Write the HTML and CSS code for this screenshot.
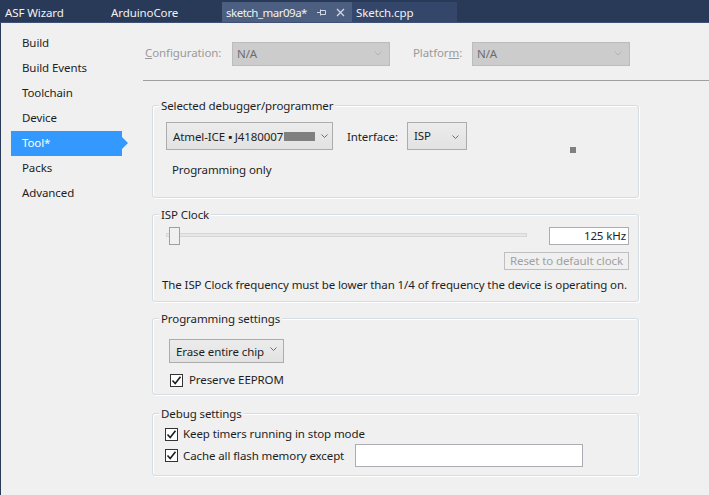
FILE: index.html
```html
<!DOCTYPE html>
<html>
<head>
<meta charset="utf-8">
<link rel="stylesheet" href="styles.css">
</head>
<body>
<div class="tabbar">
  <div class="tab t-asf">ASF Wizard</div>
  <div class="tab t-core">ArduinoCore</div>
  <div class="tab t-active">
    <span class="t-name">sketch_mar09a*</span>
    <svg class="pin" width="9" height="7" viewBox="0 0 9 7"><path d="M0 3.5H3M3.5 0.5V6.5M3.5 1.5H8.5V5.5H3.5" fill="none" stroke="#d0d7e5" stroke-width="1"/></svg>
    <svg class="close" width="9" height="9" viewBox="0 0 9 9"><path d="M1 1L8 8M8 1L1 8" stroke="#d0d7e5" stroke-width="1.3"/></svg>
  </div>
  <div class="tab t-cpp">Sketch.cpp</div>
</div>
<div class="main">
  <nav class="sidebar">
    <div class="nav-item">Build</div>
    <div class="nav-item">Build Events</div>
    <div class="nav-item">Toolchain</div>
    <div class="nav-item">Device</div>
    <div class="nav-item selected">Tool*</div>
    <div class="nav-item">Packs</div>
    <div class="nav-item">Advanced</div>
  </nav>
  <section class="content">
    <div class="config-row">
      <span class="dis-label cfg-label"><u>C</u>onfiguration:</span>
      <div class="dis-combo"><span>N/A</span><svg width="8" height="5" viewBox="0 0 8 5"><path d="M0.5 0.5L4 4L7.5 0.5" fill="none" stroke="#b4b4b4"/></svg></div>
      <span class="dis-label plat-label">Platfor<u>m</u>:</span>
      <div class="dis-combo"><span>N/A</span><svg width="8" height="5" viewBox="0 0 8 5"><path d="M0.5 0.5L4 4L7.5 0.5" fill="none" stroke="#b4b4b4"/></svg></div>
    </div>
    <div class="divider"></div>

    <div class="group g1">
      <span class="gtitle">Selected debugger/programmer</span>
      <div class="row">
        <div class="combo c-tool"><span>Atmel-ICE ▪ J4180007</span><span class="redact"></span><svg class="chev" width="7" height="4" viewBox="0 0 7 4"><path d="M0.5 0.5L3.5 3.5L6.5 0.5" fill="none" stroke="#6d6d6d"/></svg></div>
        <span class="lbl-iface">Interface:</span>
        <div class="combo c-isp"><span>ISP</span><svg class="chev" width="7" height="4" viewBox="0 0 7 4"><path d="M0.5 0.5L3.5 3.5L6.5 0.5" fill="none" stroke="#6d6d6d"/></svg></div>
      </div>
      <div class="prog-only">Programming only</div>
      <span class="dot"></span>
    </div>

    <div class="group g2">
      <span class="gtitle">ISP Clock</span>
      <div class="row slider-row">
        <div class="slider"><div class="track"></div><div class="thumb"></div></div>
        <div class="textbox tb-clock">125 kHz</div>
      </div>
      <div class="btn-row"><div class="btn-dis">Reset to default clock</div></div>
      <div class="note">The ISP Clock frequency must be lower than 1/4 of frequency the device is operating on.</div>
    </div>

    <div class="group g3">
      <span class="gtitle">Programming settings</span>
      <div class="combo c-erase"><span>Erase entire chip</span><svg class="chev" width="7" height="4" viewBox="0 0 7 4"><path d="M0.5 0.5L3.5 3.5L6.5 0.5" fill="none" stroke="#6d6d6d"/></svg></div>
      <label class="check c-eeprom"><span class="box"><svg width="11" height="11" viewBox="0 0 11 11"><path d="M1.5 5.5L4.2 8.5L9.5 1.8" fill="none" stroke="#1e1e1e" stroke-width="1.6"/></svg></span>Preserve EEPROM</label>
    </div>

    <div class="group g4">
      <span class="gtitle">Debug settings</span>
      <label class="check c-timers"><span class="box"><svg width="11" height="11" viewBox="0 0 11 11"><path d="M1.5 5.5L4.2 8.5L9.5 1.8" fill="none" stroke="#1e1e1e" stroke-width="1.6"/></svg></span>Keep timers running in stop mode</label>
      <div class="row cache-row">
        <label class="check"><span class="box"><svg width="11" height="11" viewBox="0 0 11 11"><path d="M1.5 5.5L4.2 8.5L9.5 1.8" fill="none" stroke="#1e1e1e" stroke-width="1.6"/></svg></span>Cache all flash memory except</label>
        <div class="textbox tb-cache"></div>
      </div>
    </div>
  </section>
</div>
</body>
</html>
```
FILE: styles.css
```css
* { box-sizing: border-box; }
html, body { margin: 0; padding: 0; }
body {
  width: 709px;
  height: 495px;
  overflow: hidden;
  background: #f0f0f0;
  font-family: "Noto Sans", "Open Sans", sans-serif;
  font-size: 11.5px;
  letter-spacing: -0.1px;
  color: #1e1e1e;
  white-space: nowrap;
}

/* tab bar */
.tabbar {
  height: 23px;
  background: #293a58;
  display: flex;
  align-items: flex-end;
  border-bottom: 1px solid #3e5073;
}
.tab {
  height: 20px;
  display: flex;
  align-items: center;
  padding-left: 5px;
  color: #f1f1f1;
}
.t-asf { width: 106px; }
.t-core { width: 116px; }
.t-active { width: 130px; background: #4c5f81; padding-left: 4px; }
.t-name { flex: 1; letter-spacing: -0.5px; }
.t-active .pin { margin-right: 10px; }
.t-active .close { margin-right: 7px; }
.t-cpp { width: 105px; background: #34466a; padding-left: 4px; }

/* layout */
.main { display: flex; height: 472px; }
.sidebar {
  width: 143px;
  border-left: 1px solid #293a58;
  padding-top: 8px;
}
.nav-item {
  position: relative;
  height: 25px;
  line-height: 23px;
  margin-left: 10px;
  width: 111px;
  padding-left: 11px;
}
.nav-item.selected { background: #3399ff; color: #fff; }
.nav-item.selected::after {
  content: "";
  position: absolute;
  right: -6px;
  top: 6px;
  border-left: 6px solid #3399ff;
  border-top: 6px solid transparent;
  border-bottom: 6px solid transparent;
}

.content { flex: 1; }
.config-row {
  display: flex;
  align-items: center;
  margin-top: 19px;
  padding-left: 2px;
  height: 24px;
}
.dis-label { color: #9a9a9a; line-height: 14px; padding-bottom: 2px; }
.cfg-label { width: 87px; }
.plat-label { width: 59px; margin-left: 23px; }
.dis-combo {
  width: 158px;
  height: 24px;
  background: #cccccc;
  border: 1px solid #bcbcbc;
  display: flex;
  align-items: center;
  justify-content: space-between;
  padding: 0 7px 1px 4px;
  color: #6d6d6d;
}
.divider {
  height: 1px;
  background: #a0a0a0;
  margin-top: 14px;
}

/* group boxes */
.group {
  position: relative;
  margin-left: 9px;
  width: 487px;
  border: 1px solid #d5dce3;
  border-radius: 3px;
  box-shadow: inset 1px 1px 0 #fff, 1px 1px 0 #fff;
}
.gtitle {
  position: absolute;
  top: -8px;
  left: 6px;
  padding: 0 2px;
  background: #f0f0f0;
  line-height: 16px;
}
.row { display: flex; align-items: center; }

.g1 { margin-top: 24px; height: 93px; padding: 16px 0 0 13px; }
.combo {
  display: flex;
  align-items: center;
  border: 1px solid #acacac;
  background: linear-gradient(#ececec, #e2e2e2);
  padding-left: 6px;
}
.c-tool { width: 167px; height: 28px; }
.c-tool .redact { width: 31px; height: 9px; background: #808080; margin-left: 1px; }
.c-tool .chev { margin-left: 6px; }
.lbl-iface { margin-left: 14px; width: 60px; }
.c-isp { width: 60px; height: 28px; align-items: flex-start; padding-top: 5px; justify-content: space-between; padding-right: 7px; }
.c-isp .chev { margin-top: 7px; }
.prog-only { margin: 12px 0 0 6px; line-height: 16px; }
.dot {
  position: absolute;
  left: 417px;
  top: 41px;
  width: 6px;
  height: 6px;
  background: #808080;
}

.g2 { margin-top: 16px; height: 88px; padding: 12px 9px 0 13px; }
.slider { position: relative; width: 361px; height: 18px; }
.track {
  position: absolute;
  left: 0;
  right: 0;
  top: 6px;
  height: 4px;
  border: 1px solid #d6d6d6;
  background: #e7e7e7;
}
.thumb {
  position: absolute;
  left: 3px;
  top: 0;
  width: 11px;
  height: 18px;
  border: 1px solid #a0a0a0;
  background: #f0f0f0;
}
.textbox { background: #fff; border: 1px solid #abadb3; }
.tb-clock {
  margin-left: auto;
  width: 80px;
  height: 18px;
  line-height: 16px;
  text-align: right;
  padding-right: 2px;
}
.btn-row { display: flex; justify-content: flex-end; margin-top: 7px; }
.btn-dis {
  width: 125px;
  height: 18px;
  line-height: 16px;
  border: 1px solid #bfbfbf;
  color: #a0a0a0;
  text-align: center;
}
.note { margin: 7px 0 0 -4px; line-height: 16px; }

.g3 { margin-top: 16px; height: 77px; padding: 20px 0 0 16px; }
.c-erase { width: 115px; height: 24px; justify-content: space-between; padding-right: 6px; }
.c-erase .chev { margin-bottom: 4px; }
.check { display: flex; align-items: center; line-height: 16px; }
.box {
  width: 13px;
  height: 13px;
  border: 1px solid #333;
  background: #fff;
  display: flex;
  align-items: center;
  justify-content: center;
  margin-right: 6px;
}
.c-eeprom { margin: 9px 0 0 1px; }

.g4 { margin-top: 18px; height: 63px; padding: 12px 0 0 12px; }
.c-timers .box, .cache-row .box { margin-right: 5px; }
.cache-row { margin-top: 2px; }
.tb-cache { width: 228px; height: 23px; margin-left: 11px; }
```
